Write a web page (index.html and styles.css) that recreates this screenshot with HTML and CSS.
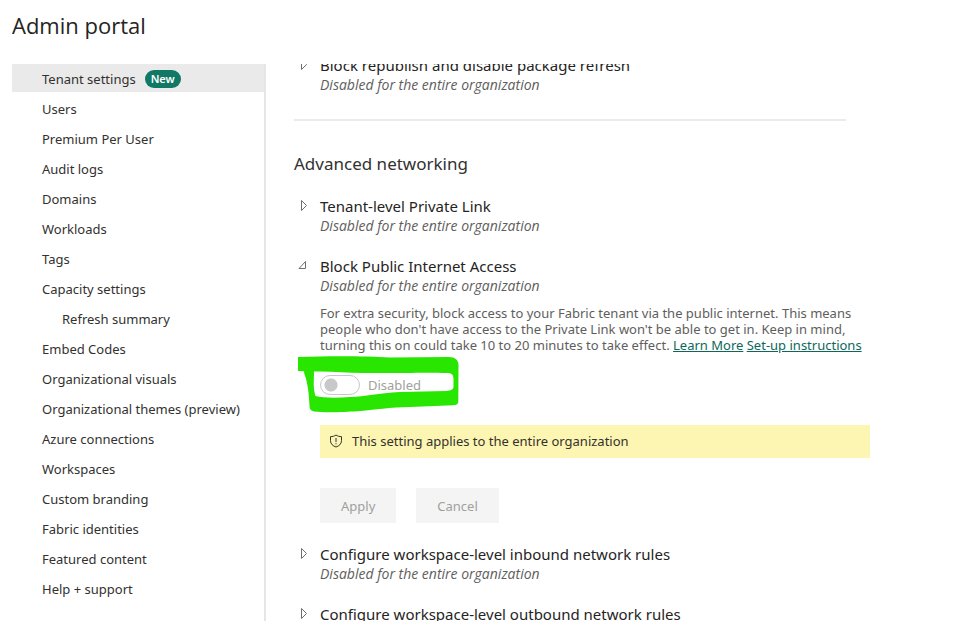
FILE: index.html
```html
<!DOCTYPE html>
<html lang="en">
<head>
<meta charset="utf-8">
<title>Admin portal</title>
<link rel="stylesheet" href="styles.css">
</head>
<body>
<header class="page-header"><h1>Admin portal</h1></header>
<div class="layout">
  <nav class="sidebar" aria-label="Admin portal">
    <a class="nav-item active" href="#">Tenant settings <span class="badge">New</span></a>
    <a class="nav-item" href="#">Users</a>
    <a class="nav-item" href="#">Premium Per User</a>
    <a class="nav-item" href="#">Audit logs</a>
    <a class="nav-item" href="#">Domains</a>
    <a class="nav-item" href="#">Workloads</a>
    <a class="nav-item" href="#">Tags</a>
    <a class="nav-item" href="#">Capacity settings</a>
    <a class="nav-item nested" href="#">Refresh summary</a>
    <a class="nav-item" href="#">Embed Codes</a>
    <a class="nav-item" href="#">Organizational visuals</a>
    <a class="nav-item" href="#">Organizational themes (preview)</a>
    <a class="nav-item" href="#">Azure connections</a>
    <a class="nav-item" href="#">Workspaces</a>
    <a class="nav-item" href="#">Custom branding</a>
    <a class="nav-item" href="#">Fabric identities</a>
    <a class="nav-item" href="#">Featured content</a>
    <a class="nav-item" href="#">Help + support</a>
  </nav>
  <main class="content">
    <div class="scrolled">
      <section class="setting">
        <button class="setting-head" type="button" aria-expanded="false">
          <svg class="arrow" viewBox="0 0 12 12"><path d="M4.500 0.500v10l5-5z"/></svg>
          <span>Block republish and disable package refresh</span>
        </button>
        <p class="status">Disabled for the entire organization</p>
      </section>
      <hr>
      <h2>Advanced networking</h2>
      <section class="setting">
        <button class="setting-head" type="button" aria-expanded="false">
          <svg class="arrow" viewBox="0 0 12 12"><path d="M4.500 0.500v10l5-5z"/></svg>
          <span>Tenant-level Private Link</span>
        </button>
        <p class="status">Disabled for the entire organization</p>
      </section>
      <section class="setting">
        <button class="setting-head" type="button" aria-expanded="true">
          <svg class="arrow" viewBox="0 0 12 12"><path d="M8.500 1.500v7h-6.500z"/></svg>
          <span>Block Public Internet Access</span>
        </button>
        <p class="status">Disabled for the entire organization</p>
        <div class="details">
          <p class="description">For extra security, block access to your Fabric tenant via the public internet. This means people who don't have access to the Private Link won't be able to get in. Keep in mind, turning this on could take 10 to 20 minutes to take effect. <a href="#">Learn More</a> <a href="#">Set-up instructions</a></p>
          <div class="toggle-row">
            <input class="toggle" id="block-access" type="checkbox" role="switch" disabled>
            <label for="block-access">Disabled</label>
            <svg class="marker" viewBox="296 355 164 60" aria-hidden="true">
              <path fill-rule="evenodd" d="M298 357C330 356 365 356 390 357.500L449 357C455 357 458.500 360 458.500 365L458.300 401C458.300 404 457 405 453 405.200L410 407C390 407 375 410 357 411.300C345 412 325 413 314 411.500C311 411 309.500 409 309.500 406C309 397 308.500 389 306.500 381C306 377 304 375 304 371.300L298 371ZM314 371.500C314 382 313 388 315.500 396C323 398 337 398 350 397C366 396.500 378 393 400 392L446 391C451 390.500 453.500 389.500 453.500 386.500V379C453.500 375 451.500 373 448 373C420 372 400 373.500 363 373C345 372.500 330 371 314 371.500Z"/>
            </svg>
          </div>
          <div class="notice">
            <svg class="shield" viewBox="0 0 14 14"><path d="M7 1C5.500 2.200 3.500 2.600 1.500 2.700V6.500C1.500 9.800 3.500 11.800 7 13C10.500 11.800 12.500 9.800 12.500 6.500V2.700C10.500 2.600 8.500 2.200 7 1ZM7 4V8M7 9.200V10.300"/></svg>
            <span>This setting applies to the entire organization</span>
          </div>
          <div class="actions">
            <button type="button" disabled>Apply</button>
            <button type="button" disabled>Cancel</button>
          </div>
        </div>
      </section>
      <section class="setting">
        <button class="setting-head" type="button" aria-expanded="false">
          <svg class="arrow" viewBox="0 0 12 12"><path d="M4.500 0.500v10l5-5z"/></svg>
          <span>Configure workspace-level inbound network rules</span>
        </button>
        <p class="status">Disabled for the entire organization</p>
      </section>
      <section class="setting">
        <button class="setting-head" type="button" aria-expanded="false">
          <svg class="arrow" viewBox="0 0 12 12"><path d="M4.500 0.500v10l5-5z"/></svg>
          <span>Configure workspace-level outbound network rules</span>
        </button>
        <p class="status">Disabled for the entire organization</p>
      </section>
    </div>
  </main>
</div>
</body>
</html>
```
FILE: styles.css
```css
* { box-sizing: border-box; }

body {
  margin: 0;
  height: 100vh;
  display: flex;
  flex-direction: column;
  overflow: hidden;
  background: #fff;
  color: #323130;
  font-family: "Segoe UI", "Noto Sans", "Open Sans", sans-serif;
  font-size: 13px;
  line-height: 20px;
}

h1, h2, p { margin: 0; }

button {
  border: 0;
  font-family: inherit;
}

.page-header { padding: 9px 12px 23px; }

h1 {
  color: #252423;
  font-family: "Segoe UI", "Open Sans", sans-serif;
  font-size: 22px;
  font-weight: 400;
  line-height: 32px;
}

.layout {
  flex: 1;
  min-height: 0;
  display: flex;
  padding-left: 12px;
}

.sidebar {
  flex: none;
  width: 254px;
  display: flex;
  flex-direction: column;
  gap: 2px;
  border-right: 2px solid #e6e6e6;
}

.nav-item {
  display: flex;
  flex: none;
  align-items: center;
  gap: 9px;
  height: 28px;
  padding: 2px 0 0 30px;
  color: inherit;
  text-decoration: none;
}

.nav-item.nested { padding-left: 50px; }
.nav-item.active { background: #eaeaea; }

.badge {
  padding: 0 6px;
  border-radius: 9px;
  background: #117865;
  color: #fff;
  font-size: 11px;
  font-weight: 600;
  line-height: 18px;
}

.content {
  flex: 1;
  min-width: 0;
  overflow: hidden;
  padding: 0 28px;
}

.scrolled {
  max-width: 576px;
  margin-top: -9px;
}

.setting { margin-bottom: 20px; }

.setting-head {
  display: flex;
  align-items: center;
  gap: 11px;
  padding: 0 0 0 3px;
  background: none;
  color: #252423;
  font-size: 15px;
  line-height: 20px;
}

.arrow {
  width: 12px;
  height: 12px;
  fill: none;
  stroke: #706e6c;
}

.status {
  padding-left: 26px;
  color: #605e5c;
  font-family: "Segoe UI", "Open Sans", sans-serif;
  font-size: 14px;
  font-style: italic;
}

hr {
  height: 2px;
  margin: 24px 24px 31px 0;
  border: 0;
  background: #eaeaea;
}

h2 {
  margin-bottom: 20px;
  font-size: 17px;
  font-weight: 400;
  line-height: 24px;
}

.details { padding: 9px 0 1px 26px; }

.description {
  color: #605e5c;
  line-height: 16px;
}

.description a { color: #0c695a; }

.toggle-row {
  position: relative;
  display: flex;
  align-items: center;
  gap: 8px;
  margin-top: 22px;
  color: #a19f9d;
}

.toggle {
  appearance: none;
  width: 40px;
  height: 20px;
  margin: 0;
  border: 1px solid #c8c8c8;
  border-radius: 10px;
  background: radial-gradient(circle at 10px 9px, #c8c8c8 6px, transparent 7px);
}

.marker {
  position: absolute;
  left: -24px;
  top: -20px;
  width: 164px;
  height: 60px;
  fill: #28e600;
  pointer-events: none;
}

.notice {
  display: flex;
  align-items: center;
  gap: 9px;
  margin-top: 30px;
  padding: 6px 9px 7px;
  background: #fdf6b2;
}

.shield {
  width: 14px;
  height: 14px;
  fill: none;
  stroke: #323130;
}

.actions {
  display: flex;
  gap: 20px;
  margin-top: 30px;
}

.actions button {
  padding: 8px 21px 7px;
  background: #f4f4f4;
  color: #a19f9d;
  font-size: 13px;
  line-height: 20px;
}
```
